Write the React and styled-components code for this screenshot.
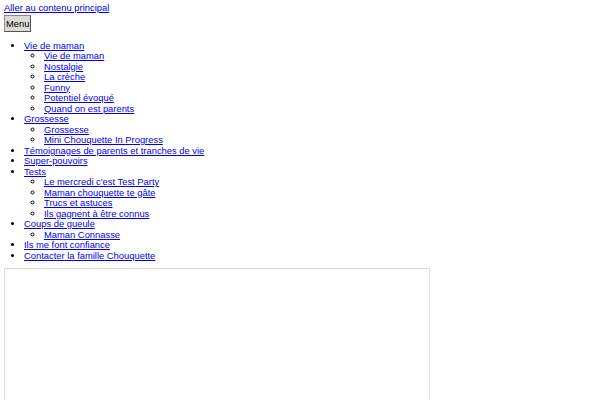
import React from 'react'
import styled, { createGlobalStyle } from 'styled-components'

const GlobalStyle = createGlobalStyle`
  html, body {
    margin: 0;
    background: #fff;
  }
  body {
    padding: 3px 4px;
    font-family: "Liberation Sans", Arial, sans-serif;
    font-size: 9.4px;
    line-height: 10.5px;
    color: #000;
  }
`

const menu = [
  { title: 'Vie de maman', children: ['Vie de maman', 'Nostalgie', 'La crèche', 'Funny', 'Potentiel évoqué', 'Quand on est parents'] },
  { title: 'Grossesse', children: ['Grossesse', 'Mini Chouquette In Progress'] },
  { title: 'Témoignages de parents et tranches de vie' },
  { title: 'Super-pouvoirs' },
  { title: 'Tests', children: ["Le mercredi c'est Test Party", 'Maman chouquette te gâte', 'Trucs et astuces', 'Ils gagnent à être connus'] },
  { title: 'Coups de gueule', children: ['Maman Connasse'] },
  { title: 'Ils me font confiance' },
  { title: 'Contacter la famille Chouquette' }
]

export default function App () {
  return (
    <>
      <GlobalStyle />
      <SkipLink href='#main'>Aller au contenu principal</SkipLink>
      <MenuButton>Menu</MenuButton>
      <NavList>
        {menu.map(item => (
          <li key={item.title}>
            <NavLink href='#'>{item.title}</NavLink>
            {item.children && (
              <SubList>
                {item.children.map(child => (
                  <li key={child}><NavLink href='#'>{child}</NavLink></li>
                ))}
              </SubList>
            )}
          </li>
        ))}
      </NavList>
      <ContentFrame id='main' />
    </>
  )
}

const SkipLink = styled.a`
  display: block;
  color: #0000ee;
  text-decoration: underline;
`

const MenuButton = styled.button`
  display: block;
  margin: 1px 0 0;
  padding: 2px 1px;
  height: 17px;
  font-family: "Liberation Sans", Arial, sans-serif;
  font-size: 9.4px;
  line-height: 11px;
  color: #000;
  background: #dcdad5;
  border: 1px solid #8a8a8a;
  border-right-color: #555;
  border-bottom-color: #555;
  border-radius: 0;
`

const NavList = styled.ul`
  margin: 9px 0 0;
  padding-left: 20px;
  list-style: disc;
`

const SubList = styled.ul`
  margin: 0;
  padding-left: 20px;
  list-style: circle;
`

const NavLink = styled.a`
  color: #0000ee;
  text-decoration: underline;
`

const ContentFrame = styled.div`
  margin-top: 7px;
  width: 424px;
  height: 200px;
  border: 1px solid #dcdcdc;
`
